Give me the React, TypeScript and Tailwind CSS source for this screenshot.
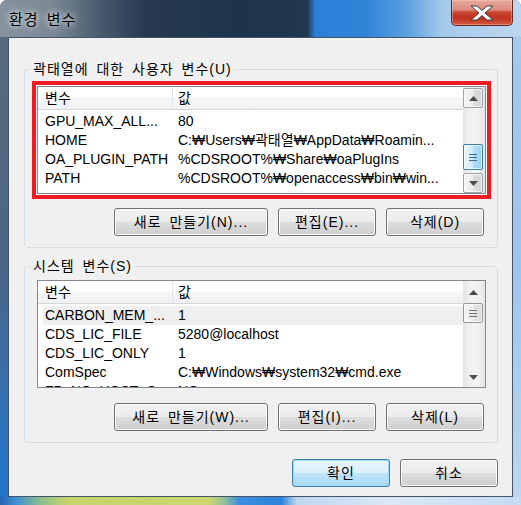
import React from "react";

type Row = { name: string; value: string; selected?: boolean };

const userRows: Row[] = [
  { name: "GPU_MAX_ALL...", value: "80" },
  { name: "HOME", value: "C:₩Users₩곽태열₩AppData₩Roamin..." },
  { name: "OA_PLUGIN_PATH", value: "%CDSROOT%₩Share₩oaPlugIns" },
  { name: "PATH", value: "%CDSROOT%₩openaccess₩bin₩win..." },
];

const sysRows: Row[] = [
  { name: "CARBON_MEM_...", value: "1", selected: true },
  { name: "CDS_LIC_FILE", value: "5280@localhost" },
  { name: "CDS_LIC_ONLY", value: "1" },
  { name: "ComSpec", value: "C:₩Windows₩system32₩cmd.exe" },
  { name: "FP_NO_HOST_C...", value: "NO" },
];

function Arrow({ up }: { up?: boolean }) {
  return (
    <svg width="9" height="5" viewBox="0 0 9 5">
      {up ? (
        <polygon points="0,5 4.5,0 9,5" fill="#4b4b4b" />
      ) : (
        <polygon points="0,0 9,0 4.5,5" fill="#4b4b4b" />
      )}
    </svg>
  );
}

function Gripper({ hot }: { hot?: boolean }) {
  const c = hot ? "bg-[#3d6a8f]" : "bg-[#6f6f6f]";
  return (
    <div className="flex flex-col gap-[2px] items-center">
      <div className={`w-[8px] h-[1px] ${c}`} />
      <div className={`w-[8px] h-[1px] ${c}`} />
      <div className={`w-[8px] h-[1px] ${c}`} />
    </div>
  );
}

function HotButton({ up }: { up?: boolean }) {
  return (
    <div className="w-[20px] h-[20px] rounded-[2px] border border-[#9aa1a8] bg-[linear-gradient(90deg,#f4f4f4_0%,#ececec_50%,#dcdcdc_55%,#d4d4d4_100%)] shadow-[inset_0_0_0_1px_rgba(255,255,255,0.7)] flex items-center justify-center">
      <Arrow up={up} />
    </div>
  );
}

function Scrollbar({ hot }: { hot?: boolean }) {
  if (hot) {
    return (
      <div className="w-[22px] shrink-0 pr-[2px] flex flex-col bg-[linear-gradient(90deg,#e3e3e3_0%,#efefef_25%,#f3f3f3_50%,#eeeeee_80%,#e6e6e6_100%)]">
        <div className="mt-[1px]">
          <HotButton up />
        </div>
        <div className="h-[36px]" />
        <div className="w-[20px] h-[26px] rounded-[2px] border border-[#3c7fb1] bg-[linear-gradient(90deg,#e6f5fd_0%,#d3edfb_45%,#aedcf6_55%,#a1d4f2_100%)] shadow-[inset_0_0_0_1px_rgba(255,255,255,0.6)] flex items-center justify-center">
          <Gripper hot />
        </div>
        <div className="flex-1" />
        <HotButton />
      </div>
    );
  }
  return (
    <div className="w-[22px] shrink-0 pr-[2px] flex flex-col bg-[linear-gradient(90deg,#e3e3e3_0%,#efefef_25%,#f3f3f3_50%,#eeeeee_80%,#e6e6e6_100%)]">
      <div className="mt-[1px] w-[20px] h-[20px] flex items-center justify-center">
        <Arrow up />
      </div>
      <div className="mt-[1px] w-[20px] h-[20px] rounded-[2px] border border-[#979797] bg-[linear-gradient(90deg,#f5f5f5_0%,#eeeeee_50%,#e2e2e2_55%,#dadada_100%)] shadow-[inset_0_0_0_1px_rgba(255,255,255,0.7)] flex items-center justify-center">
        <Gripper />
      </div>
      <div className="flex-1" />
      <div className="w-[20px] h-[20px] flex items-center justify-center">
        <Arrow />
      </div>
    </div>
  );
}

function ListView({ rows, hot }: { rows: Row[]; hot?: boolean }) {
  return (
    <div className="w-[449px] h-[108px] border border-[#828790] bg-white flex overflow-hidden">
      <div className="flex-1 min-w-0 flex flex-col">
        <div className="h-[23px] shrink-0 flex border-b border-[#d5d5d5] bg-[linear-gradient(180deg,#ffffff_0%,#ffffff_45%,#f5f6f7_50%,#f1f2f4_100%)]">
          <div className="w-[135px] pl-[7px] border-r border-[#e2e5ea] leading-[22px]">변수</div>
          <div className="pl-[5px] leading-[22px]">값</div>
        </div>
        <div className="pt-[2px] flex flex-col">
          {rows.map((r, i) => (
            <div
              key={i}
              className={`ml-[5px] h-[19px] shrink-0 flex whitespace-nowrap leading-[19px] ${r.selected ? "bg-[#efefef]" : ""}`}
            >
              <div className="w-[130px] pl-[2px] overflow-hidden">{r.name}</div>
              <div className="pl-[5px] overflow-hidden">{r.value}</div>
            </div>
          ))}
        </div>
      </div>
      <Scrollbar hot={hot} />
    </div>
  );
}

function Btn({ label, w, primary }: { label: string; w: string; primary?: boolean }) {
  return (
    <div
      className={`${w} h-[28px] shrink-0 rounded-[3px] border flex items-center justify-center leading-none whitespace-nowrap tracking-[1px] [word-spacing:3px] ${
        primary
          ? "border-[#3c7fb1] bg-[linear-gradient(180deg,#e8f5fc_0%,#d9effb_50%,#bfe5f9_50%,#a9d9f3_100%)] shadow-[inset_0_0_0_1px_#9fdbf6]"
          : "border-[#707070] bg-[linear-gradient(180deg,#f2f2f2_0%,#ebebeb_50%,#dddddd_50%,#cfcfcf_100%)] shadow-[inset_0_0_0_1px_#fcfcfc]"
      }`}
    >
      {label}
    </div>
  );
}

function CloseBtn() {
  return (
    <div className="mr-[8px] w-[62px] h-[26px] rounded-b-[5px] border border-t-0 border-[#5a2b28] bg-[linear-gradient(180deg,#e6a99c_0%,#da8d7e_38%,#c8452f_50%,#bf321f_72%,#d35a40_100%)] shadow-[inset_0_0_0_1px_rgba(255,220,210,0.35)] flex items-center justify-center">
      <svg width="24" height="16" viewBox="0 0 24 16">
        <polygon
          points="1,1 7,1 12,5.4 17,1 23,1 15,8 23,15 17,15 12,10.6 7,15 1,15 9,8"
          fill="#ffffff"
          stroke="#3d3d3d"
          strokeWidth="1"
          strokeLinejoin="round"
        />
      </svg>
    </div>
  );
}

export default function App() {
  return (
    <div className="w-[521px] h-[505px] font-['Liberation_Sans','Noto_Sans_CJK_KR',sans-serif] text-[14px] text-black">
      <div className="w-full h-full flex flex-col rounded-t-[7px] overflow-hidden bg-[#5a6b7e]">
        <div className="h-[37px] shrink-0 flex items-start justify-between bg-[linear-gradient(90deg,#86939f_0%,#7a8894_10%,#46576b_20%,#26394f_28%,#1f344c_45%,#21374f_59%,#2b80d6_60.5%,#2f84d8_70%,#5a9fde_78%,#a6caeb_85%,#bdd6ee_100%)]">
          <div className="pl-[9px] pt-[12px] text-[15px] leading-[16px] tracking-[1px] [word-spacing:3px] [text-shadow:0_0_8px_rgba(255,255,255,0.9),0_0_4px_rgba(255,255,255,0.6)]">
            환경 변수
          </div>
          <CloseBtn />
        </div>
        <div className="h-[460px] shrink-0 flex">
          <div className="w-[8px] shrink-0 bg-[linear-gradient(180deg,#57697d_0%,#4a6684_50%,#2f72bc_85%,#1f74cc_100%)]" />
          <div className="w-[505px] shrink-0 border border-[#44546a] bg-[#f0f0f0] flex flex-col">
            <fieldset className="ml-[15px] mt-[23px] w-[474px] min-w-0 border border-[#d5dfe5] rounded-[3px] px-[7px] pb-[11px]">
              <legend className="ml-[-1px] px-[2px] leading-[16px] tracking-[1px] [word-spacing:3px]">곽태열에 대한 사용자 변수(U)</legend>
              <div className="mt-[4px] w-[459px] h-[118px] border-[4px] border-[#ec1c24] bg-white p-[1px]">
                <ListView rows={userRows} hot />
              </div>
              <div className="mt-[9px] flex justify-end gap-[10px] pr-[6px]">
                <Btn label="새로 만들기(N)..." w="w-[154px]" />
                <Btn label="편집(E)..." w="w-[98px]" />
                <Btn label="삭제(D)" w="w-[98px]" />
              </div>
            </fieldset>
            <fieldset className="ml-[15px] mt-[10px] w-[474px] min-w-0 border border-[#d5dfe5] rounded-[3px] px-[7px] pb-[11px]">
              <legend className="ml-[-1px] px-[2px] leading-[16px] tracking-[1px] [word-spacing:3px]">시스템 변수(S)</legend>
              <div className="mt-[6px] ml-[5px]">
                <ListView rows={sysRows} />
              </div>
              <div className="mt-[15px] flex justify-end gap-[10px] pr-[6px]">
                <Btn label="새로 만들기(W)..." w="w-[154px]" />
                <Btn label="편집(I)..." w="w-[98px]" />
                <Btn label="삭제(L)" w="w-[98px]" />
              </div>
            </fieldset>
            <div className="mt-[16px] flex justify-end gap-[10px] pr-[14px]">
              <Btn label="확인" w="w-[98px]" primary />
              <Btn label="취소" w="w-[98px]" />
            </div>
          </div>
          <div className="w-[8px] shrink-0 bg-[linear-gradient(180deg,#a7c8e7_0%,#9dc5ea_50%,#bcd6ef_100%)]" />
        </div>
        <div className="h-[8px] shrink-0 bg-[linear-gradient(90deg,#2766b0_0%,#3d8fd0_3%,#8fc08a_8%,#c6d46a_13%,#cbd76c_40%,#8fbf9a_43%,#3d8fe0_46%,#2c84da_54%,#bfd8ef_57%,#dbe8f4_75%,#c4dbf0_100%)]" />
      </div>
    </div>
  );
}
